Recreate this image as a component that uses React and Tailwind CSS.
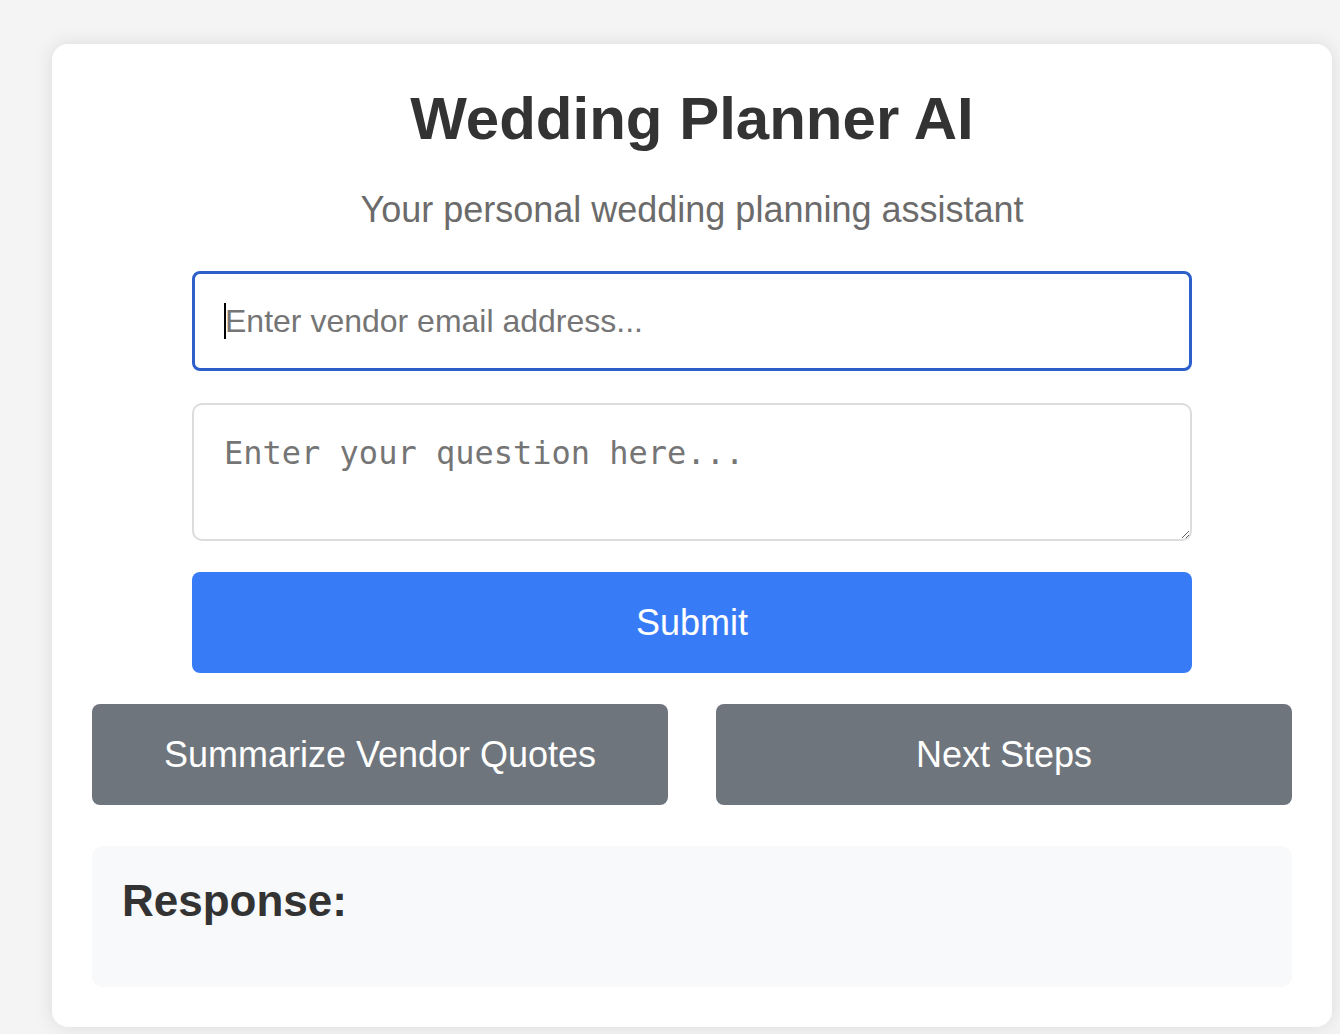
import { useState } from 'react';

const App = () => {
  const [email, setEmail] = useState('');
  const [question, setQuestion] = useState('');

  return (
    <div className="min-h-screen bg-[#f4f4f4] pt-[44px] pl-[52px] font-['Liberation_Sans',Arial,sans-serif]">
      <div className="w-[1280px] bg-white rounded-[16px] shadow-[0_0_20px_rgba(0,0,0,0.1)] px-[40px] pt-[40px] pb-[40px]">
        {/* Header */}
        <h1 className="text-center text-[60px] leading-[70px] font-bold text-[#333]">Wedding Planner AI</h1>
        <p className="mt-[35px] text-center text-[36px] leading-[42px] text-[#6b6b6b]">
          Your personal wedding planning assistant
        </p>

        {/* Form */}
        <div className="w-[1000px] mx-auto mt-[40px] flex flex-col">
          <div className="relative">
            <input
              type="email"
              value={email}
              onChange={(e) => setEmail(e.target.value)}
              placeholder="Enter vendor email address..."
              className="w-full h-[100px] px-[30px] border-[3px] border-[#2c5fc9] rounded-[8px] text-[32px] text-[#333] placeholder:text-[#757575] outline-none"
            />
            <span className="absolute left-[32px] top-[32px] w-[2px] h-[36px] bg-black" />
          </div>
          <textarea
            value={question}
            onChange={(e) => setQuestion(e.target.value)}
            placeholder="Enter your question here..."
            className="mt-[32px] w-full h-[138px] px-[30px] py-[24px] border-2 border-[#dcdcdc] rounded-[10px] text-[32px] font-['DejaVu_Sans_Mono',monospace] text-[#333] placeholder:text-[#757575] outline-none"
          />
          <button className="mt-[31px] w-full h-[101px] bg-[#377cf6] text-white text-[36px] rounded-[8px]">
            Submit
          </button>
        </div>

        {/* Quick actions */}
        <div className="mt-[31px] grid grid-cols-2 gap-[48px]">
          <button className="h-[101px] bg-[#6e757d] text-white text-[36px] rounded-[8px]">Summarize Vendor Quotes</button>
          <button className="h-[101px] bg-[#6e757d] text-white text-[36px] rounded-[8px]">Next Steps</button>
        </div>

        {/* Response */}
        <div className="mt-[41px] h-[141px] bg-[#f8f9fa] rounded-[10px] px-[30px] pt-[30px]">
          <h3 className="text-[44px] leading-[50px] font-bold text-[#333]">Response:</h3>
        </div>
      </div>
    </div>
  );
};

export default App;
